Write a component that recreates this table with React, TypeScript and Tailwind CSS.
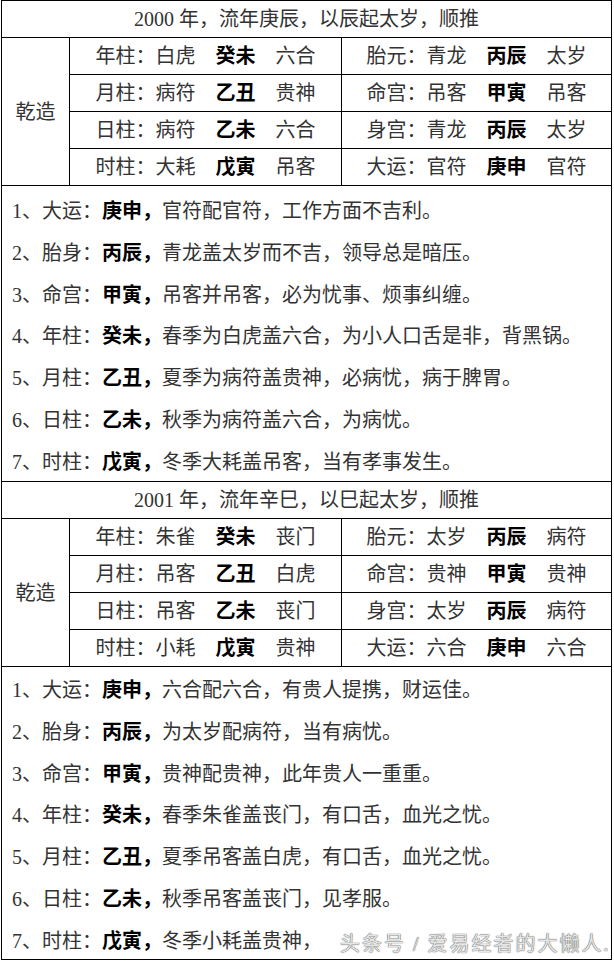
import React from "react";

type Cell = { label: string; a: string; gz: string; b: string };
type Row = [Cell, Cell];
type Line = { n: string; k: string; gz: string; text: string };
type Block = { title: string; rows: Row[]; lines: Line[] };

const blocks: Block[] = [
  {
    title: "2000 年，流年庚辰，以辰起太岁，顺推",
    rows: [
      [
        { label: "年柱：", a: "白虎", gz: "癸未", b: "六合" },
        { label: "胎元：", a: "青龙", gz: "丙辰", b: "太岁" },
      ],
      [
        { label: "月柱：", a: "病符", gz: "乙丑", b: "贵神" },
        { label: "命宫：", a: "吊客", gz: "甲寅", b: "吊客" },
      ],
      [
        { label: "日柱：", a: "病符", gz: "乙未", b: "六合" },
        { label: "身宫：", a: "青龙", gz: "丙辰", b: "太岁" },
      ],
      [
        { label: "时柱：", a: "大耗", gz: "戊寅", b: "吊客" },
        { label: "大运：", a: "官符", gz: "庚申", b: "官符" },
      ],
    ],
    lines: [
      { n: "1", k: "大运", gz: "庚申", text: "官符配官符，工作方面不吉利。" },
      { n: "2", k: "胎身", gz: "丙辰", text: "青龙盖太岁而不吉，领导总是暗压。" },
      { n: "3", k: "命宫", gz: "甲寅", text: "吊客并吊客，必为忧事、烦事纠缠。" },
      { n: "4", k: "年柱", gz: "癸未", text: "春季为白虎盖六合，为小人口舌是非，背黑锅。" },
      { n: "5", k: "月柱", gz: "乙丑", text: "夏季为病符盖贵神，必病忧，病于脾胃。" },
      { n: "6", k: "日柱", gz: "乙未", text: "秋季为病符盖六合，为病忧。" },
      { n: "7", k: "时柱", gz: "戊寅", text: "冬季大耗盖吊客，当有孝事发生。" },
    ],
  },
  {
    title: "2001 年，流年辛巳，以巳起太岁，顺推",
    rows: [
      [
        { label: "年柱：", a: "朱雀", gz: "癸未", b: "丧门" },
        { label: "胎元：", a: "太岁", gz: "丙辰", b: "病符" },
      ],
      [
        { label: "月柱：", a: "吊客", gz: "乙丑", b: "白虎" },
        { label: "命宫：", a: "贵神", gz: "甲寅", b: "贵神" },
      ],
      [
        { label: "日柱：", a: "吊客", gz: "乙未", b: "丧门" },
        { label: "身宫：", a: "太岁", gz: "丙辰", b: "病符" },
      ],
      [
        { label: "时柱：", a: "小耗", gz: "戊寅", b: "贵神" },
        { label: "大运：", a: "六合", gz: "庚申", b: "六合" },
      ],
    ],
    lines: [
      { n: "1", k: "大运", gz: "庚申", text: "六合配六合，有贵人提携，财运佳。" },
      { n: "2", k: "胎身", gz: "丙辰", text: "为太岁配病符，当有病忧。" },
      { n: "3", k: "命宫", gz: "甲寅", text: "贵神配贵神，此年贵人一重重。" },
      { n: "4", k: "年柱", gz: "癸未", text: "春季朱雀盖丧门，有口舌，血光之忧。" },
      { n: "5", k: "月柱", gz: "乙丑", text: "夏季吊客盖白虎，有口舌，血光之忧。" },
      { n: "6", k: "日柱", gz: "乙未", text: "秋季吊客盖丧门，见孝服。" },
      // the rest of this line sits under the watermark
      { n: "7", k: "时柱", gz: "戊寅", text: "冬季小耗盖贵神，" },
    ],
  },
];

function PillarCell({ c, border }: { c: Cell; border?: boolean }) {
  return (
    <div
      className={
        border
          ? "w-[272px] border-r border-black flex items-center justify-center gap-5"
          : "flex-1 flex items-center justify-center gap-5"
      }
    >
      <span>
        {c.label}
        {c.a}
      </span>
      <span className="font-bold text-black">{c.gz}</span>
      <span>{c.b}</span>
    </div>
  );
}

function YearBlock({ b, last }: { b: Block; last?: boolean }) {
  return (
    <>
      <div className="h-[37px] border-b border-black flex items-center justify-center">
        {b.title}
      </div>
      <div className="flex h-[148px] border-b border-black">
        <div className="w-[68px] border-r border-black flex items-center justify-center">
          乾造
        </div>
        <div className="flex-1 flex flex-col">
          {b.rows.map((r, i) => (
            <div
              key={i}
              className={
                i < 3 ? "h-[37px] border-b border-black flex" : "h-[36px] flex"
              }
            >
              <PillarCell c={r[0]} border />
              <PillarCell c={r[1]} />
            </div>
          ))}
        </div>
      </div>
      <div
        className={
          last
            ? "relative h-[292px] pl-[10px] pt-[3px] leading-[41.8px]"
            : "h-[296px] border-b border-black pl-[10px] pt-[5px] leading-[41.8px]"
        }
      >
        {b.lines.map((l) => (
          <div key={l.n} className="whitespace-nowrap">
            {l.n}、{l.k}：
            <span className="font-bold text-black">{l.gz}，</span>
            {l.text}
          </div>
        ))}
        {last && (
          <div className="absolute left-[338px] top-[263px] whitespace-nowrap leading-[28px] text-[20px] tracking-[2px] text-[#e6e6e6] [text-shadow:0_0_1px_#555,0_0_1px_#555]">
            头条号 / 爱易经者的大懒人.
          </div>
        )}
      </div>
    </>
  );
}

export default function App() {
  return (
    <div className="w-[614px] h-[961px] bg-white overflow-hidden">
      <div
        className="ml-[1px] w-[611px] h-[960px] border border-black text-[20px] text-[#333]"
        style={{ fontFamily: '"Liberation Serif", "Noto Sans CJK SC", serif' }}
      >
        {blocks.map((b, i) => (
          <YearBlock key={i} b={b} last={i === blocks.length - 1} />
        ))}
      </div>
    </div>
  );
}
